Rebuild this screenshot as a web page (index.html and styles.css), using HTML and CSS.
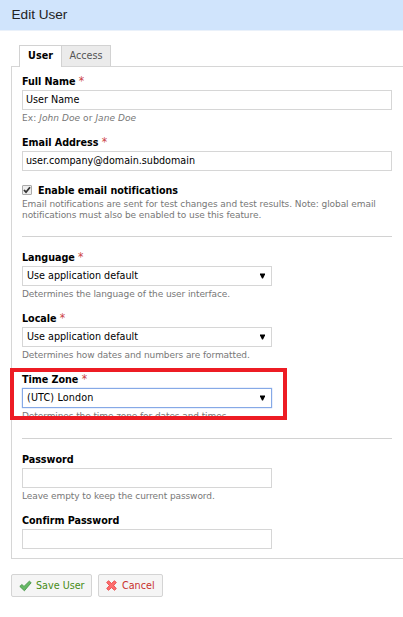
FILE: index.html
```
<!DOCTYPE html>
<html lang="en">
<head>
<meta charset="utf-8">
<title>Edit User</title>
<link rel="stylesheet" href="styles.css">
</head>
<body>
<header class="header"><h1 class="title">Edit User</h1></header>
<form class="form">
  <nav class="tabs"><a class="tab active">User</a><a class="tab">Access</a></nav>
  <section class="panel">
    <div class="field">
      <label class="label">Full Name <span class="req">*</span></label>
      <div class="control wide">User Name</div>
      <p class="hint example">Ex: <i>John Doe</i> or <i>Jane Doe</i></p>
    </div>
    <div class="field">
      <label class="label">Email Address <span class="req">*</span></label>
      <div class="control wide email">user.company@domain.subdomain</div>
    </div>
    <div class="check-row">
      <span class="checkbox"><svg viewBox="0 0 10 10" width="10" height="10"><path d="M2 5 4 7.2 8 2.2" fill="none" stroke="#333" stroke-width="1.8"/></svg></span>
      <label class="label check-label">Enable email notifications</label>
    </div>
    <p class="hint notice">Email notifications are sent for test changes and test results. Note: global email<br>notifications must also be enabled to use this feature.</p>
    <hr class="rule">
    <div class="field">
      <label class="label">Language <span class="req">*</span></label>
      <div class="control select">Use application default<svg class="arrow" viewBox="0 0 5 5"><path d="M0 0h5v1L3 5H2L0 1z"/></svg></div>
      <p class="hint">Determines the language of the user interface.</p>
    </div>
    <div class="field">
      <label class="label">Locale <span class="req">*</span></label>
      <div class="control select">Use application default<svg class="arrow" viewBox="0 0 5 5"><path d="M0 0h5v1L3 5H2L0 1z"/></svg></div>
      <p class="hint">Determines how dates and numbers are formatted.</p>
    </div>
    <div class="field zone">
      <label class="label">Time Zone <span class="req">*</span></label>
      <div class="control select focused">(UTC) London<svg class="arrow" viewBox="0 0 5 5"><path d="M0 0h5v1L3 5H2L0 1z"/></svg></div>
      <p class="hint">Determines the time zone for dates and times.</p>
      <span class="highlight"></span>
    </div>
    <hr class="rule second">
    <div class="field">
      <label class="label">Password</label>
      <div class="control"></div>
      <p class="hint">Leave empty to keep the current password.</p>
    </div>
    <div class="field">
      <label class="label">Confirm Password</label>
      <div class="control"></div>
    </div>
  </section>
  <div class="actions">
    <button type="button" class="button save"><svg width="13" height="12" viewBox="0 0 13 12"><path d="M.8 6.4 2.9 4.5 5 6.4 10.3 1.2 12.2 2.7 5.4 10.8z" fill="#66b966" stroke="#3f913f" stroke-width=".8"/></svg><span>Save User</span></button>
    <button type="button" class="button cancel"><svg width="11" height="11" viewBox="0 0 11 11"><path d="M2.5.7 5.5 3.5 8.5.7 10.3 2.5 7.7 5.5 10.3 8.6 8.5 10.3 5.5 7.6 2.5 10.3.7 8.6 3.4 5.5.7 2.5z" fill="#ff6c6c" stroke="#e23c3c" stroke-width=".8"/></svg><span>Cancel</span></button>
  </div>
</form>
</body>
</html>
```
FILE: styles.css
```
* { box-sizing: border-box; }
body { margin: 0; height: 617px; overflow: hidden; background: #fff; font: 10.7px/14px "DejaVu Sans Condensed", "DejaVu Sans", Verdana, sans-serif; color: #000; }
.header { height: 31px; background: #d0e4fc; border-bottom: 1px solid #eaf1fa; padding-left: 11.5px; }
.title { margin: 0; font: 13.6px/29px "Liberation Sans", Arial, sans-serif; color: #222; }
.form { padding: 14px 0 0 11px; }
.tabs { display: flex; position: relative; height: 22px; padding-left: 8px; }
.tab { width: 49px; height: 21px; border: 1px solid #d2d2d2; border-left: 0; border-bottom: 0; background: #ebebeb; color: #555; line-height: 20px; text-align: center; }
.tab.active { width: 43px; height: 22px; border-left: 1px solid #d2d2d2; background: #fff; color: #000; font-weight: bold; }
.panel { width: 402px; height: 493px; margin-top: -1px; padding: 7px 0 0 10px; border: 1px solid #d6d6d6; }
.field { position: relative; height: 61px; }
.label { display: block; height: 16px; line-height: 15px; font-weight: bold; letter-spacing: -.04px; }
.req { color: #c44; font-weight: normal; font-size: 12px; line-height: 1; }
.control { width: 250px; height: 20px; padding-left: 3px; border: 1px solid #d6d6d6; line-height: 18px; white-space: nowrap; }
.email { letter-spacing: -.01px; }
.wide { width: 370px; }
.select { display: flex; align-items: center; justify-content: space-between; padding: 0 6px 0 4px; }
.arrow { width: 5px; height: 6px; }
.focused { border-color: #86a9e6; box-shadow: 0 0 1px #7ba5ef; letter-spacing: .15px; }
.hint { margin: 2px 0 0; font-family: "DejaVu Sans", Verdana, sans-serif; font-size: 9px; line-height: 13px; letter-spacing: -.09px; color: #777; white-space: nowrap; }
.example { letter-spacing: .07px; }
.check-row { display: flex; align-items: center; height: 14px; margin-top: -13px; }
.checkbox { display: block; width: 10px; height: 10px; border: 1px solid #aaa; border-radius: 1px; background: #eee; }
.checkbox svg { display: block; margin: -1px; }
.check-label { height: 14px; margin-left: 6px; }
.notice { margin-top: 2px; line-height: 10.5px; letter-spacing: -.075px; }
.rule { width: 370px; height: 1px; margin: 16px 0 13px; border: 0; background: #d2d2d2; }
.second { margin: 5px 0 13px; }
.highlight { position: absolute; left: -12px; top: -4px; width: 277px; height: 52px; border: 4px solid #ed1c24; }
.actions { display: flex; gap: 6px; margin-top: 15px; }
.button { display: flex; align-items: center; height: 23px; padding: 0 0 0 7px; border: 1px solid #d4d4d4; border-radius: 2px; background: #f5f5f5; font: inherit; white-space: nowrap; }
.save { width: 81px; color: #478c17; }
.cancel { width: 65px; color: #c9302c; }
.button span { margin-left: 4px; }
.cancel span { margin-left: 5px; }
```
